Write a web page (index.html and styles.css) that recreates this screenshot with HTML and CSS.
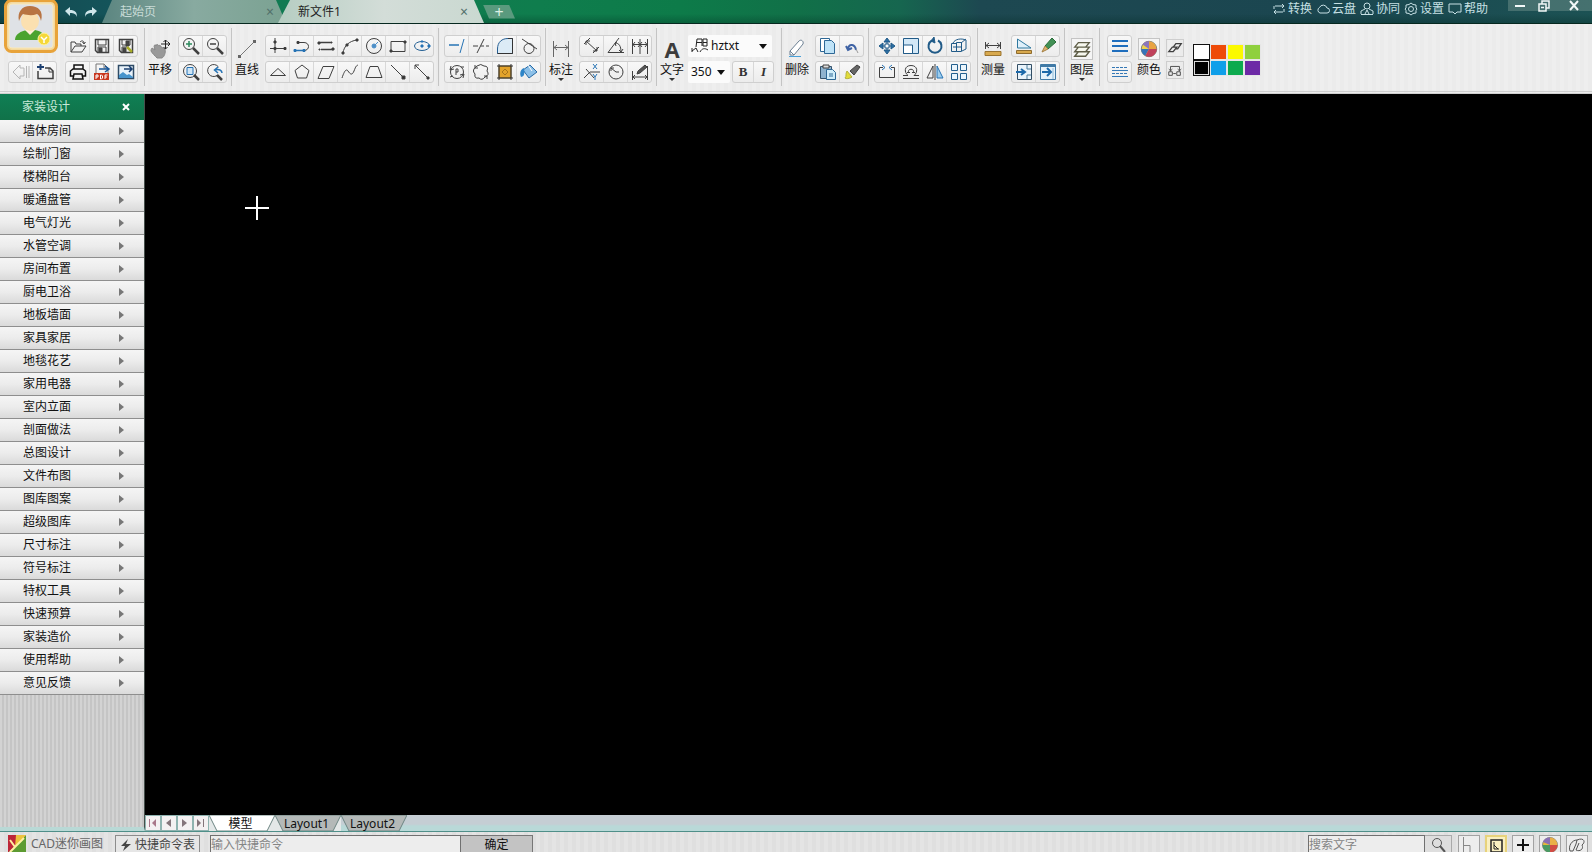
FILE: index.html
```html
<!DOCTYPE html>
<html lang="zh-CN">
<head>
<meta charset="utf-8">
<title>CAD迷你画图</title>
<link rel="stylesheet" href="styles.css">
</head>
<body>
<header class="titlebar">
  <button class="avatar" aria-label="用户">
    <svg viewBox="0 0 54 54"><rect x="1.500" y="1.500" width="51" height="51" rx="6" fill="#f3d9a0" stroke="#e8a33a" stroke-width="3"/><rect x="5" y="5" width="44" height="44" rx="3" fill="#dfe2e6" stroke="#fbe9b8"/><path d="M11 41c0-6 6-9 12-10h8c5 1 10 3 10 10z" fill="#4ba32f"/><path d="M21 31l5 5 5-5-1-4h-8z" fill="#fff0d8"/><ellipse cx="26" cy="22" rx="9" ry="10" fill="#fbe0b0"/><path d="M15 22c-2-9 3-15 11-15s14 5 11 15c-1-4-2-6-4-7-5 2-10 1-14 0-2 2-3 4-4 7z" fill="#b87442"/><circle cx="40" cy="40" r="6" fill="#f5d83a" stroke="#fff2a0"/><path d="M37 38l3 3 3-3M40 41v3" stroke="#fff" fill="none" stroke-width="1.500"/></svg>
  </button>
  <div class="history">
    <button aria-label="撤销"><svg viewBox="0 0 14 12"><path d="M1 5l5-4v3c5 0 7 2 7 7-1-3-3-4-7-4v3z" fill="#cfe6ea"/></svg></button>
    <button aria-label="重做"><svg viewBox="0 0 14 12"><path d="M13 5L8 1v3c-5 0-7 2-7 7 1-3 3-4 7-4v3z" fill="#cfe6ea"/></svg></button>
  </div>
  <nav class="doc-tabs">
    <div class="doc-tab"><button class="doc-name">起始页</button><button class="doc-close" aria-label="关闭起始页">×</button></div>
    <div class="doc-tab active"><button class="doc-name">新文件1</button><button class="doc-close" aria-label="关闭新文件1">×</button></div>
    <button class="new-tab" aria-label="新建">+</button>
  </nav>
  <nav class="menu">
    <button><svg viewBox="0 0 14 14"><path d="M3 4h9M10 2l2 2-2 2M2 7V4M11 10H2M4 8l-2 2 2 2M12 7v3"/></svg>转换</button>
    <button><svg viewBox="0 0 14 14"><path d="M4 11a3 3 0 0 1-.5-5.500A4 4 0 0 1 11 6a2.500 2.500 0 0 1 0 5z"/></svg>云盘</button>
    <button><svg viewBox="0 0 14 14"><circle cx="7" cy="4" r="3"/><path d="M1 12V9l4-2M13 12V9L9 7M1 12.500h12M5 12l2-4 2 4"/></svg>协同</button>
    <button><svg viewBox="0 0 14 14"><path d="M7 1l2 1.500 3 .5 0 3 1 1-1 1.500V11l-3 .5L7 13l-2-1.500L2 11V8.500L1 7l1-1V3l3-.5z"/><circle cx="7" cy="7" r="2.500"/></svg>设置</button>
    <button><svg viewBox="0 0 14 14"><path d="M1 2h12v8H9l-2 2-2-2H1z"/></svg>帮助</button>
  </nav>
  <div class="window-controls">
    <button aria-label="最小化"><svg viewBox="0 0 12 12"><path d="M1 6h10" stroke-width="2"/></svg></button>
    <button aria-label="还原"><svg viewBox="0 0 12 12"><path d="M4 4V1h7v7H8M1 4h7v7H1zM3 7.500h3" stroke-width="1.500"/></svg></button>
    <button class="win-close" aria-label="关闭"><svg viewBox="0 0 12 12"><path d="M2 1l8 9M10 1l-8 9" stroke-width="2"/></svg></button>
  </div>
</header>

<div class="toolbar">
  <section class="tool-section files">
    <div class="rows end">
      <div class="group">
        <button aria-label="打开"><svg viewBox="0 0 18 18"><path d="M2 15V5h4l1 2h5v2M2 15l4-6h11l-4 6zM11 5c2-2 4-1 4 1M13.500 5l1.500 2 1.500-2"/></svg></button>
        <button aria-label="保存"><svg viewBox="0 0 18 18"><path d="M2.500 2.500h13v13h-11l-2-2z" stroke-width="1.500"/><path d="M5 3v5h8V3M5 15v-5h8v5" /><path d="M6 11h3v4H6z" fill="#444"/></svg></button>
        <button aria-label="另存为"><svg viewBox="0 0 18 18"><path d="M2.500 2.500h13v13h-11l-2-2z" stroke-width="1.500"/><path d="M5 3v5h8V3M5 15v-5h5"/><path d="M6 11h3v4H6zM9 4h3v5H9z" fill="#444"/><path d="M10 10l5 5" stroke="#a9ad2a" stroke-width="2.500"/></svg></button>
      </div>
      <div class="pair">
        <div class="group">
          <button aria-label="后退"><svg viewBox="0 0 18 18"><path d="M1 9l7-7v3h4v8H8v3zM14.500 3v12M17 3v12" stroke="#b5b5b5"/></svg></button>
          <button aria-label="新建"><svg viewBox="0 0 18 18"><path d="M2 8v7.500h15V8l-3-3H9" stroke-width="1.500"/><path d="M1 4h7M4.500 1v6" stroke="#1c3f70" stroke-width="2"/><path d="M13 5v4h4"/></svg></button>
        </div>
        <div class="group">
          <button aria-label="打印"><svg viewBox="0 0 18 18"><path d="M5 6V2h9v4M5 11h8l1 5H4zM4 13H1.500V8L4 6h10l2.500 2v5H14" stroke="#111" stroke-width="1.500"/></svg></button>
          <button aria-label="输出PDF"><svg viewBox="0 0 18 18"><path d="M3 10V1h8l4 4v5M11 1v4h4" stroke="#777"/><path d="M6 6h10M12 3l4 3-4 3" stroke="#1a5798" stroke-width="1.500"/><path d="M1 10h15v7H1z" fill="#c8371f" stroke="none"/><path d="M3 16v-4h2v2H3M7.500 12v4h1l1-1v-2l-1-1zM12 16v-4h2.500M12 14h2" stroke="#fff"/></svg></button>
          <button aria-label="输出图片"><svg viewBox="0 0 18 18"><path d="M1.500 2.500h15v13h-15z" stroke="#2f4b66" fill="#e8f2fa" stroke-width="1.500"/><path d="M2 12l4-3 4 3 2-1 4 3v1H2z" fill="#4794cc" stroke="none"/><path d="M7 6h8M12 3l3 3-3 3" stroke="#1a3f70" stroke-width="1.500"/></svg></button>
        </div>
      </div>
    </div>
  </section>

  <section class="tool-section">
    <button class="big"><svg viewBox="0 0 22 22"><path d="M3 10l3 2-1-4c1-2 2-1 2 0 0-2 2-2 3 0 0-1 2-1 2 1l4 2c1 4-1 8-3 9H8c-2-2-5-5-6-7 0-2 1-3 1-3z" fill="#999" stroke="#888"/><path d="M12 6h9M16.500 2v9M14.500 4l2-2 2 2M14.500 9l2 2 2-2M19 4l2 2-2 2" stroke="#222"/></svg><span>平移</span></button>
    <div class="rows">
      <div class="group">
        <button aria-label="放大"><svg viewBox="0 0 18 18"><circle cx="7" cy="7" r="5.500"/><path d="M11 11l6 6" stroke-width="2.500"/><path d="M4 7h6M7 4v6" stroke="#2c8a5e" stroke-width="1.500"/></svg></button>
        <button aria-label="缩小"><svg viewBox="0 0 18 18"><circle cx="7" cy="7" r="5.500"/><path d="M11 11l6 6" stroke-width="2.500"/><path d="M4 7h6" stroke-width="1.500"/></svg></button>
      </div>
      <div class="group">
        <button aria-label="窗口缩放"><svg viewBox="0 0 18 18"><circle cx="8" cy="8" r="6.500"/><path d="M5 4.500h6v7H5z" stroke="#2673b4" fill="#cfe5f5"/><path d="M12 12l5 5" stroke-width="2.500"/></svg></button>
        <button aria-label="返回缩放"><svg viewBox="0 0 18 18"><path d="M11 12.500a6 6 0 1 1 1.500-8.500"/><path d="M16 10c0-3-3-4-7-3M12 4L8.500 7l3.500 3" stroke="#2673b4" stroke-width="1.500"/><path d="M11 12l5 5" stroke-width="2.500"/></svg></button>
      </div>
    </div>
  </section>

  <section class="tool-section">
    <button class="big"><svg viewBox="0 0 22 22"><path d="M4 18L18 4" stroke="#777"/><path d="M2 17h3v3H2zM17 2h3v3h-3z" fill="#666" stroke="none"/></svg><span>直线</span></button>
    <div class="rows">
      <div class="group">
        <button aria-label="构造线"><svg viewBox="0 0 18 18"><path d="M6 1v15M1 11.500h16"/><path d="M5 4h2v2H5zM5 10.500h2v2H5zM15 10.500h2v2h-2z" fill="#333"/></svg></button>
        <button aria-label="多段线"><svg viewBox="0 0 18 18"><path d="M5 5.500h6c6 0 6 8 0 8"/><path d="M1 13.500h10" stroke="#2673b4" stroke-width="1.500"/><path d="M4 4.500h2v2H4z" fill="#333"/><path d="M1 12.500h2v2H1zM10 12.500h2v2h-2z" fill="#2673b4" stroke="#2673b4"/></svg></button>
        <button aria-label="双线"><svg viewBox="0 0 18 18"><path d="M3 5.500h11M4 12.500h12" stroke-width="1.500"/><path d="M1 5h2v2H1zM15 11h2v2h-2zM14 5h1v1h-1zM2 12h1v1H2z" fill="#333"/></svg></button>
        <button aria-label="圆弧"><svg viewBox="0 0 18 18"><path d="M2 16C3 9 8 4 16 3"/><path d="M1 15h2v2H1zM5 7h2v2H5zM15 2h2v2h-2z" fill="#333"/></svg></button>
        <button aria-label="圆"><svg viewBox="0 0 18 18"><circle cx="9" cy="9" r="7.500"/><circle cx="9" cy="9" r="2" fill="#4c8fc8" stroke="#4c8fc8"/><path d="M9 9l4-4" stroke="#4c8fc8"/></svg></button>
        <button aria-label="矩形"><svg viewBox="0 0 18 18"><path d="M2 4.500h14v10H2z"/><path d="M1 13h2v2H1zM15 4h2v2h-2z" fill="#333"/></svg></button>
        <button aria-label="椭圆"><svg viewBox="0 0 18 18"><ellipse cx="9" cy="9" rx="7.500" ry="4.500" stroke="#235f93"/><path d="M8 8h2v2H8zM8 4h2v1H8zM15 8h2v2h-2z" fill="#2673b4" stroke="#2673b4"/></svg></button>
      </div>
      <div class="group">
        <button aria-label="三角形"><svg viewBox="0 0 18 18"><path d="M1.500 12.500L9 5.500l7.500 7z"/></svg></button>
        <button aria-label="多边形"><svg viewBox="0 0 18 18"><path d="M9 2l7 5.500L13.500 15h-9L2 7.500z"/></svg></button>
        <button aria-label="平行四边形"><svg viewBox="0 0 18 18"><path d="M6 3.500h11l-5 12H1z"/></svg></button>
        <button aria-label="样条曲线"><svg viewBox="0 0 18 18"><path d="M1 15c2-6 4-10 6-7s4 5 6 0 2-5 4-6"/></svg></button>
        <button aria-label="梯形"><svg viewBox="0 0 18 18"><path d="M5 3.500h8l4 11H1z"/></svg></button>
        <button aria-label="射线"><svg viewBox="0 0 18 18"><path d="M2 2l13 13"/><path d="M13 13h3v3h-3z" fill="#333"/></svg></button>
        <button aria-label="双向线"><svg viewBox="0 0 18 18"><path d="M2 2l14 14M2 6V2h4"/><path d="M14 14h2v2h-2z" fill="#333"/></svg></button>
      </div>
    </div>
  </section>

  <section class="tool-section plain">
    <div class="rows">
      <div class="group">
        <button aria-label="延伸"><svg viewBox="0 0 18 18"><path d="M1 8h10" stroke="#2673b4" stroke-width="1.500"/><path d="M16 2l-4 14" stroke="#2673b4"/></svg></button>
        <button aria-label="修剪"><svg viewBox="0 0 18 18"><path d="M1 9h5M9 9h3M14 9h3M12 2L5 16"/></svg></button>
        <button aria-label="圆角"><svg viewBox="0 0 18 18"><path d="M1.500 16.500V12C1.500 5 6 1.500 12 1.500h4.500v15z" fill="#dcebf6" stroke="#275f93"/><path d="M12 1.500h4.500v15h-15" stroke="#333"/></svg></button>
        <button aria-label="相切"><svg viewBox="0 0 18 18"><circle cx="9" cy="11.500" r="5"/><path d="M2 2l15 10"/></svg></button>
      </div>
      <div class="group">
        <button aria-label="圆形阵列"><svg viewBox="0 0 18 18"><circle cx="9" cy="9" r="6.500"/><path d="M3 3l-1 4 4-1M15 15l1-4-4 1M8 12V6h2v3H8M2 14l3-1M13 4l3 0"/></svg></button>
        <button aria-label="修订云线"><svg viewBox="0 0 18 18"><path d="M5 3q4-3 7 0 5 0 3 5 3 4-2 6-3 4-6 1-5 1-4-4-4-4 2-8zM3 2v3h3M15 16v-3h-3"/></svg></button>
        <button aria-label="图案填充"><svg viewBox="0 0 18 18"><path d="M3 3h12v12H3z" fill="#e3a32b" stroke="#82601c"/><path d="M1 3h16M1 15h16M3 1v16M15 1v16" stroke="#333"/><path d="M6 9l3-3 3 3-3 3z" stroke="#a8741a"/></svg></button>
        <button aria-label="填充颜色"><svg viewBox="0 0 18 18"><path d="M3 7l7-5 7 7-8 6z" fill="#8cc0e8" stroke="#286ba6"/><path d="M8 2l4 6" stroke="#fff"/><path d="M4 5c-3 1-5 5-3 9 3 0 4-3 3-8z" fill="#2e85c8" stroke="none"/></svg></button>
      </div>
    </div>
  </section>

  <section class="tool-section">
    <button class="big arrow"><svg viewBox="0 0 22 22"><path d="M3.500 3v16M18.500 3v16M4 9.500h14M7 7L4 9.500 7 12M15 7l3 2.500-3 2.500" stroke="#666"/></svg><span>标注</span></button>
    <div class="rows">
      <div class="group">
        <button aria-label="对齐标注"><svg viewBox="0 0 18 18"><path d="M1 7l6-6M10 16l6-6M3 4l11 10M3 8V4h4M10 14h4v-4"/></svg></button>
        <button aria-label="角度标注"><svg viewBox="0 0 18 18"><path d="M12 1L1 15.500h16M8 6c4 0 6 3 6 9M10 5L8 6l1 3M12 13l2 2 2-3"/></svg></button>
        <button aria-label="连续标注"><svg viewBox="0 0 18 18"><path d="M1.500 2v15M9 2v15M16.500 2v15M2 7.500h14M4 5L2 7.500 4 10M7 5l2 2.500L7 10M11 5L9 7.500 11 10M14 5l2 2.500L14 10" /></svg></button>
      </div>
      <div class="group">
        <button aria-label="坐标标注"><svg viewBox="0 0 18 18"><path d="M1 15l6-6h10M3 6l8 9"/><path d="M10 1l4 5M14 1l-4 5M10 11l2 3 2-3M12 14v3" stroke="#2673b4"/></svg></button>
        <button aria-label="半径标注"><svg viewBox="0 0 18 18"><circle cx="9" cy="9" r="7"/><path d="M9 9L4 5M4 8V5h3M9 9h3"/></svg></button>
        <button aria-label="编辑标注"><svg viewBox="0 0 18 18"><path d="M1.500 8v9M16.500 3v14M2 14h14M4 12l-2 2 2 2M14 12l2 2-2 2"/><path d="M6 11l1-3 7-6 2 2-7 6z" fill="#555"/></svg></button>
      </div>
    </div>
  </section>

  <section class="tool-section text-tools">
    <button class="big arrow"><span class="letter">A</span><span>文字</span></button>
    <div class="rows">
      <label class="field font-field"><svg viewBox="0 0 18 18"><path d="M1 14l4-3M5 11l2 4M1 11v4M5 10l1-8h5v7M6 5.500h5M12 2h4v7h-4zM12 5.500h4M9 15c2-4 5-4 8-2" stroke="#222"/></svg><select aria-label="字体"><option>hztxt</option></select><i></i></label>
      <div class="pair">
        <label class="field size-field"><select aria-label="字高"><option>350</option></select><i></i></label>
        <div class="group style-group"><button class="bold">B</button><button class="italic">I</button></div>
      </div>
    </div>
  </section>

  <section class="tool-section">
    <button class="big"><svg viewBox="0 0 22 22"><path d="M4 13L13 3c2-2 5 0 4 3L8 17H4z" fill="#fff" stroke="#6b7f92"/><path d="M4 13l4 4" stroke="#6b7f92"/><path d="M3 18.500h12" stroke="#49a0d8"/></svg><span>删除</span></button>
    <div class="rows">
      <div class="group">
        <button aria-label="复制"><svg viewBox="0 0 18 18"><path d="M1.500 1.500h9v13h-9z" fill="#fff" stroke="#2e6896"/><path d="M5.500 3.500h7l3 3v10h-10z" fill="#bfe3f7" stroke="#2e6896"/></svg></button>
        <button aria-label="带基点复制"><svg viewBox="0 0 18 18"><path d="M5 12c1-6 7-5 8 1M3 9l2 4 4-2" stroke="#3e62a4" stroke-width="2"/><path d="M13 12l2 4" stroke="#999"/></svg></button>
      </div>
      <div class="group">
        <button aria-label="粘贴"><svg viewBox="0 0 18 18"><path d="M1.500 3.500h11v12h-11z" fill="#8fb3ce" stroke="#34536c"/><path d="M4 2h6v3H4z" fill="#ddd"/><path d="M7.500 6.500h6l3 3v7h-9z" fill="#d0edfa" stroke="#2e6896"/><path d="M10 11h4M10 13h4" stroke="#2e6896"/></svg></button>
        <button aria-label="格式刷"><svg viewBox="0 0 18 18"><path d="M4 8l5 6c-3 2-6 2-7 1 2-2 0-4 2-7z" fill="#e2dc3a" stroke="#b5b23c"/><path d="M7 8l7-6 3 2-6 8z" fill="#666"/></svg></button>
      </div>
    </div>
  </section>

  <section class="tool-section plain modify">
    <div class="rows">
      <div class="group blue">
        <button aria-label="移动"><svg viewBox="0 0 18 18"><path d="M9 3v12M3 9h12"/><path d="M9 1l3 4H6zM9 17l3-4H6zM1 9l4-3v6zM17 9l-4-3v6z" fill="#2b6da3"/><path d="M7 7h4v4H7z" fill="#fff"/></svg></button>
        <button aria-label="缩放"><svg viewBox="0 0 18 18"><path d="M1.500 1.500h15v15h-15z" fill="#d3e8f7"/><path d="M1.500 8h9v8.500h-9z" fill="#fff"/></svg></button>
        <button aria-label="旋转"><svg viewBox="0 0 18 18"><path d="M6 3.500a6.500 6.500 0 1 0 6 0" stroke-width="2"/><path d="M8 0l-3 4 4 2z" fill="#215b88"/></svg></button>
        <button aria-label="三维旋转"><svg viewBox="0 0 18 18"><path d="M1.500 6.500h5v8h-5zM6.500 5.500h5v9h-5zM3 6c2-4 8-5 13-3v9l-4 2M11 6l5-4M3 10h9"/></svg></button>
      </div>
      <div class="group">
        <button aria-label="打断"><svg viewBox="0 0 18 18"><path d="M5 4.500H1.500v10h15v-10H13"/><path d="M4 2l3 2.500L4 7M14 2l-3 2.500L14 7" stroke="#2673b4"/></svg></button>
        <button aria-label="偏移"><svg viewBox="0 0 18 18"><path d="M1 15.500h16M1 12.500h5c-4-3-4-10 3-10s7 7 3 10h5M7 10c-3-5 7-5 4 0M5 9.500h3M10 9.500h3"/></svg></button>
        <button aria-label="镜像"><svg viewBox="0 0 18 18"><path d="M7 3v12H1z"/><path d="M11 3v12h6z" fill="#9dcdec" stroke="#2673b4"/><path d="M9 1v16"/></svg></button>
        <button aria-label="阵列"><svg viewBox="0 0 18 18"><path d="M1.500 1.500h6v6h-6zM10.500 1.500h6v6h-6zM1.500 10.500h6v6h-6zM10.500 10.500h6v6h-6z" stroke="#245f8d" fill="#eaf5fc"/></svg></button>
      </div>
    </div>
  </section>

  <section class="tool-section">
    <button class="big"><svg viewBox="0 0 22 22"><path d="M3.500 4v7M18.500 4v7M4 7.500h14M7 5L4 7.500 7 10M15 5l3 2.500-3 2.500"/><path d="M3 13.500h16v4H3z" fill="#d8a94e" stroke="#9b7430"/></svg><span>测量</span></button>
    <div class="rows">
      <div class="group">
        <button aria-label="面积"><svg viewBox="0 0 18 18"><path d="M2.500 2v9H16z" fill="#dff0fa" stroke="#2e789f"/><path d="M1.500 13.500h15v3h-15z" fill="#d8a94e" stroke="#8f6c2e"/></svg></button>
        <button aria-label="测量笔"><svg viewBox="0 0 18 18"><path d="M6 9l7-8 4 4-8 7z" fill="#429155" stroke="#286b38"/><path d="M6 9l3 3-6 3z" fill="#dcb46f" stroke="#a58044"/></svg></button>
      </div>
      <div class="group">
        <button aria-label="插入"><svg viewBox="0 0 18 18"><path d="M2.500 1.500h14v15h-14z" fill="#e9f3fa" stroke="#334e65"/><path d="M1 9h8M6 6l4 3-4 3" stroke="#1c69aa" stroke-width="2"/><path d="M12 2v4h4M12 16v-4h4" stroke="#4d7e9e"/></svg></button>
        <button aria-label="导入"><svg viewBox="0 0 18 18"><path d="M1.500 1.500h15v15h-15z" fill="#e5f2fb" stroke="#407aa6"/><path d="M2 3h14" stroke="#407aa6" stroke-width="2"/><path d="M3 9h8M8 5l4 4-4 4" stroke="#1c69aa" stroke-width="2"/><path d="M14 5v11" stroke="#8dbbd9"/></svg></button>
      </div>
    </div>
  </section>

  <section class="tool-section layers">
    <button class="big arrow framed"><svg viewBox="0 0 22 22"><path d="M3 19l4-5h12l-4 5zM3 14l4-5h12l-4 5zM3 9l4-5h12l-4 5z" fill="#f7f8ee" stroke="#5f5e48" stroke-width="1.500"/></svg><span>图层</span></button>
  </section>

  <section class="tool-section last">
    <div class="rows">
      <div class="group"><button aria-label="线宽"><svg viewBox="0 0 18 18"><path d="M1 4h16M1 9h16M1 14h16" stroke="#1f6ebd" stroke-width="2"/></svg></button></div>
      <div class="group"><button aria-label="线型"><svg viewBox="0 0 18 18"><path d="M1 4.500h16M1 10.500h16" stroke="#3578b6" stroke-dasharray="3 1"/><path d="M1 7.500h16M1 13.500h16" stroke="#3578b6"/></svg></button></div>
    </div>
    <button class="big framed"><svg viewBox="0 0 22 22"><circle cx="11" cy="11" r="8.500" fill="#efd34b" stroke="#777"/><path d="M11 11L4 6a8.500 8.500 0 0 1 7-3.500z" fill="#8b76bd" stroke="none"/><path d="M11 11V2.500a8.500 8.500 0 0 1 8 8.500z" fill="#e9a343" stroke="none"/><path d="M2.500 11H11l-4 7.500a8.500 8.500 0 0 1-4.500-7.500z" fill="#3673b8" stroke="none"/><path d="M11 11h8.500A8.500 8.500 0 0 1 7 18.500z" fill="#c0425c" stroke="none"/></svg><span>颜色</span></button>
    <div class="small-buttons">
      <button aria-label="图层工具"><svg viewBox="0 0 18 18"><path d="M2 13l4-5h5l-4 5zM7 8l3-4h6l-4 6h-3" stroke-width="1.500"/></svg></button>
      <button aria-label="线路"><svg viewBox="0 0 18 18"><path d="M4 10V5h10v5M7 13h3M2 11h4v4H2zM11 11h4v4h-4zM2 8l2 2 2-2M12 8l2 2 2-2"/></svg></button>
    </div>
    <div class="palette">
      <button class="c-white" aria-label="白"></button><button class="c-orange" aria-label="橙"></button><button class="c-yellow" aria-label="黄"></button><button class="c-lime" aria-label="浅绿"></button>
      <button class="c-black" aria-label="黑"></button><button class="c-blue" aria-label="蓝"></button><button class="c-green" aria-label="绿"></button><button class="c-purple" aria-label="紫"></button>
    </div>
  </section>
</div>

<main class="workspace">
  <aside class="sidebar">
    <div class="side-head"><h2>家装设计</h2><button aria-label="关闭面板"><svg viewBox="0 0 8 8"><path d="M1 1l6 6M7 1L1 7"/></svg></button></div>
    <nav class="side-list">
      <button>墙体房间</button><button>绘制门窗</button><button>楼梯阳台</button><button>暖通盘管</button><button>电气灯光</button>
      <button>水管空调</button><button>房间布置</button><button>厨电卫浴</button><button>地板墙面</button><button>家具家居</button>
      <button>地毯花艺</button><button>家用电器</button><button>室内立面</button><button>剖面做法</button><button>总图设计</button>
      <button>文件布图</button><button>图库图案</button><button>超级图库</button><button>尺寸标注</button><button>符号标注</button>
      <button>特权工具</button><button>快速预算</button><button>家装造价</button><button>使用帮助</button><button>意见反馈</button>
    </nav>
  </aside>
  <div class="drawing">
    <div class="canvas">
      <svg class="crosshair" viewBox="0 0 24 24"><path d="M0 12h24M12 0v24"/></svg>
    </div>
    <div class="sheet-bar">
      <div class="sheet-nav">
        <button aria-label="首页"><svg viewBox="0 0 12 12"><path d="M9 2v8L5 6zM2 2h1v8H2z" fill="#a9788a"/></svg></button>
        <button aria-label="上一页"><svg viewBox="0 0 12 12"><path d="M8 2v8L3 6z" fill="#84757b"/></svg></button>
        <button aria-label="下一页"><svg viewBox="0 0 12 12"><path d="M3 2v8l5-4z" fill="#84757b"/></svg></button>
        <button aria-label="末页"><svg viewBox="0 0 12 12"><path d="M2 2v8l4-4zM8 2h1v8H8z" fill="#84757b"/></svg></button>
      </div>
      <button class="sheet active"><svg viewBox="0 0 66 16" preserveAspectRatio="none"><path d="M0 0l8 16h50l8-16z"/></svg><span>模型</span></button>
      <button class="sheet"><svg viewBox="0 0 66 16" preserveAspectRatio="none"><path d="M0 0l8 16h50l8-16z"/></svg><span>Layout1</span></button>
      <button class="sheet"><svg viewBox="0 0 66 16" preserveAspectRatio="none"><path d="M0 0l8 16h50l8-16z"/></svg><span>Layout2</span></button>
    </div>
  </div>
</main>

<footer class="status">
  <div class="brand"><svg viewBox="0 0 18 18"><path d="M0 0h18L0 18z" fill="#bd2638"/><path d="M18 0v18H0z" fill="#5d9b32"/><path d="M8 0h10L7 12z" fill="#edc33d"/><path d="M2 5l5 7 9-9M7 12l-5 5" stroke="#fff0a0" stroke-width="2" fill="none"/></svg><span>CAD迷你画图</span></div>
  <button class="shortcut"><svg viewBox="0 0 12 14"><path d="M8 1L1 8h4l-2 5 8-7H6z" fill="#444"/></svg>快捷命令表</button>
  <form class="command"><input type="text" placeholder="输入快捷命令" aria-label="输入快捷命令"><button type="button">确定</button></form>
  <form class="search"><input type="text" placeholder="搜索文字" aria-label="搜索文字"><button type="button" aria-label="搜索"><svg viewBox="0 0 18 18"><circle cx="8" cy="7" r="4.500"/><path d="M11 10l5 6" stroke-width="2"/></svg></button></form>
  <div class="modes">
    <button aria-label="正交"><svg viewBox="0 0 18 18"><path d="M3.500 1v17M4 9.500h6V18" stroke="#888"/></svg></button>
    <button class="on" aria-label="捕捉"><svg viewBox="0 0 18 18"><path d="M4 3h11v12H4z" stroke="#222" stroke-width="1.500"/><path d="M7 5v7h5M7 8l4 4" stroke="#222"/></svg></button>
    <button aria-label="十字光标"><svg viewBox="0 0 18 18"><path d="M3 9h12M9 3v12" stroke="#111" stroke-width="2"/></svg></button>
    <button aria-label="背景颜色"><svg viewBox="0 0 18 18"><circle cx="9" cy="9" r="7.500" fill="#e6b838" stroke="#888"/><path d="M9 9L2 6a7 7 0 0 1 7-4.500z" fill="#8a70b4" stroke="none"/><path d="M9 1.500A7.500 7.500 0 0 1 16.500 9H9z" fill="#e9b048" stroke="none"/><path d="M1.500 9H9v7.500A7.500 7.500 0 0 1 1.500 9z" fill="#4a9a62" stroke="none"/><path d="M9 9h7.500A7.500 7.500 0 0 1 9 16.500z" fill="#d14c45" stroke="none"/></svg></button>
    <button aria-label="橡皮"><svg viewBox="0 0 18 18"><path d="M2 15c-2-5 2-11 7-11l-1 4-3 7zM9 4c7-3 9 2 5 5 2 4-2 7-6 5l3-7" stroke="#555"/></svg></button>
  </div>
</footer>
</body>
</html>
```

FILE: styles.css
```css
* { box-sizing: border-box; }

body {
  margin: 0;
  height: 100vh;
  display: flex;
  flex-direction: column;
  overflow: hidden;
  background: #ececec;
  color: #111;
  font: 12px/16px "Noto Sans", "Noto Sans CJK SC", sans-serif;
}

button, input, select { font: inherit; color: inherit; margin: 0; }
button { padding: 0; border: 0; background: none; white-space: nowrap; }
svg { display: block; flex: none; fill: none; }

/* Title bar */
.titlebar {
  position: relative;
  display: flex;
  flex: none;
  height: 24px;
  padding-left: 64px;
  border-bottom: 1px solid #06281f;
  background:
    linear-gradient(180deg, transparent 60%, rgba(0, 40, 30, .3)),
    linear-gradient(90deg, #14484f 0, #14545a 110px, #107a52 280px, #0f7d4d 540px, #0d7b49 680px, #117048 800px, #16664f 900px, #1d4851 980px, #1b4650 1300px, #1c5254 100%);
}

.avatar {
  position: absolute;
  z-index: 2;
  left: 4px;
  top: -1px;
}
.avatar svg { width: 54px; height: 54px; }

.history { display: flex; align-items: center; gap: 6px; }
.history svg { width: 14px; height: 12px; }

.doc-tabs { display: flex; padding-left: 4px; }
.doc-tab {
  display: flex;
  align-items: center;
  justify-content: space-between;
  width: 184px;
  height: 23px;
  padding: 0 12px 0 18px;
  color: #c8dbd6;
  background: linear-gradient(90deg, #5b8580, #88aaa0 50%, #7ba292);
  clip-path: polygon(10px 0, 174px 0, 184px 100%, 0 100%);
}
.doc-tab.active {
  width: 212px;
  margin-left: -8px;
  padding: 0 22px 0 20px;
  color: #222;
  background: linear-gradient(90deg, #b6cdc2, #d3ddd8 50%, #c9d8d0);
  clip-path: polygon(12px 0, 196px 0, 206px 100%, 0 100%);
}
.doc-close { color: #52706a; font-size: 14px; }
.new-tab {
  align-self: center;
  width: 32px;
  height: 14px;
  margin-left: -7px;
  color: #dcefe4;
  font-size: 16px;
  line-height: 14px;
  background: #5a9a7e;
  clip-path: polygon(0 0, 26px 0, 32px 100%, 6px 100%);
}

.menu { display: flex; gap: 4px; margin-left: auto; height: 17px; color: #c7e0e4; }
.menu button { display: flex; align-items: center; gap: 2px; }
.menu svg { width: 14px; height: 14px; stroke: #c7e0e4; }

.window-controls {
  display: flex;
  height: 11px;
  margin-left: 20px;
  background: rgba(120, 150, 145, .45);
}
.window-controls button { display: grid; place-items: center; width: 24px; height: 10px; }
.window-controls .win-close { width: 36px; }
.window-controls svg { width: 12px; height: 12px; stroke: #f2f8f8; }

/* Toolbar */
.toolbar {
  display: flex;
  flex: none;
  height: 70px;
  padding: 4px 0 5px;
  border-bottom: 3px double #cfcfcf;
  background: repeating-linear-gradient(90deg, #eeeeee 0 4px, #ebebeb 4px 8px);
}
.toolbar svg { width: 18px; height: 18px; stroke: #404040; }
.tool-section {
  display: flex;
  align-items: flex-start;
  gap: 3px;
  padding: 0 4px 0 0;
  border-right: 1px solid #c4c4c4;
}
.tool-section.plain { padding-left: 5px; }
.tool-section.files { width: 145px; justify-content: flex-end; padding-right: 6px; }
.tool-section.modify { padding-right: 6px; }
.tool-section.layers { padding: 0 2px; }
.tool-section.last { gap: 2px; padding-left: 7px; border-right: 0; }
.rows { display: flex; flex-direction: column; gap: 4px; padding-top: 7px; }
.rows.end { align-items: flex-end; }
.pair { display: flex; gap: 8px; }
.group {
  display: flex;
  height: 22px;
  border: 1px solid #cfcfcf;
  border-radius: 3px;
  background: linear-gradient(#f8f8f8, #ececec);
}
.group button {
  display: grid;
  place-items: center;
  width: 24px;
  border-left: 1px solid #d8d8d8;
}
.group button:first-child { border-left: 0; width: 23px; }
.blue svg { stroke: #215b88; }

.big {
  display: flex;
  flex-direction: column;
  align-items: center;
  gap: 2px;
  width: 30px;
  padding-top: 10px;
}
.big svg { width: 22px; height: 22px; }
.big.arrow::after {
  content: "";
  width: 0;
  margin-top: -2px;
  border: 3px solid transparent;
  border-top-color: #333;
  border-bottom: 0;
}
.big.framed svg { border: 1px solid #c4c4c4; background: #f5f5f5; }
.letter { font: bold 22px/22px "Open Sans", sans-serif; color: #3c3c3c; }

.field {
  display: flex;
  align-items: center;
  height: 22px;
  gap: 2px;
  padding: 0 5px 0 3px;
  background: #fbfbfb;
  border-radius: 2px;
}
.field select {
  flex: 1;
  min-width: 0;
  padding: 0;
  border: 0;
  background: none;
  appearance: none;
}
.field i { border: 4px solid transparent; border-top: 5px solid #111; border-bottom: 0; }
.font-field { width: 84px; }
.size-field { width: 42px; }
.text-tools { gap: 1px; }
.text-tools .rows { width: 89px; }
.text-tools .pair { gap: 2px; }
.style-group button, .style-group button:first-child { width: 20px; font: bold 13px/18px "Liberation Serif", serif; color: #333; }
.style-group .italic { font-style: italic; }

.small-buttons { display: grid; gap: 4px; padding-top: 11px; }
.small-buttons button { width: 18px; height: 18px; border: 1px solid #cecece; }
.small-buttons svg { width: 16px; height: 16px; }
.palette {
  display: grid;
  grid-template-columns: repeat(4, 17px);
  grid-auto-rows: 16px;
  margin: 16px 0 0 7px;
}
.palette button { border: 1px solid #e6e6e6; }
.palette .c-white { background: #fff; border-color: #111; }
.palette .c-black { background: #000; border-color: #111; box-shadow: inset 0 0 0 1px #ddd; }
.c-orange { background: #ee4b09; }
.c-yellow { background: #fbf900; }
.c-lime { background: #8fd03e; }
.c-blue { background: #109fe9; }
.c-green { background: #0daa4e; }
.c-purple { background: #6d2aa6; }

/* Workspace */
.workspace { display: flex; flex: 1; min-height: 0; }
.sidebar {
  display: flex;
  flex-direction: column;
  flex: none;
  width: 145px;
  border-right: 1px solid #46504c;
  border-bottom: 4px solid #b9d9d6;
  background: repeating-linear-gradient(90deg, #d3d3d3 0 2px, #c5c5c5 2px 4px);
}
.side-head {
  display: flex;
  align-items: center;
  justify-content: space-between;
  height: 26px;
  padding: 0 14px 0 22px;
  color: #c9e9d9;
  background: linear-gradient(#0f7f54, #107249);
}
.side-head h2 { margin: 0; font: inherit; }
.side-head svg { width: 8px; height: 8px; stroke: #fff; stroke-width: 2; }
.side-list { display: flex; flex-direction: column; }
.side-list button {
  display: flex;
  align-items: center;
  justify-content: space-between;
  height: 23px;
  padding: 0 20px 0 23px;
  border-bottom: 1px solid #8e8e8e;
  background: linear-gradient(#f5f5f5, #ececec 50%, #dadada);
}
.side-list button::after {
  content: "";
  border: 4px solid transparent;
  border-left: 5px solid #777;
  border-right: 0;
}

.drawing { display: flex; flex-direction: column; flex: 1; min-width: 0; }
.canvas { position: relative; flex: 1; background: #000; }
.crosshair {
  position: absolute;
  left: 100px;
  top: 102px;
  width: 24px;
  height: 24px;
  stroke: #fff;
  stroke-width: 2;
}

.sheet-bar {
  display: flex;
  flex: none;
  height: 16px;
  background: linear-gradient(#c5ced4 0 9px, #b9d9d8 11px);
}
.sheet-nav { display: flex; width: 64px; }
.sheet-nav button {
  display: grid;
  place-items: center;
  flex: 1;
  border: 1px solid #8fb3b0;
  background: #f4f1f2;
}
.sheet-nav svg { width: 12px; height: 12px; }
.sheet { display: grid; width: 66px; place-items: center; background: #e4e8e8; }
.sheet svg, .sheet span { grid-area: 1 / 1; }
.sheet svg { width: 66px; height: 16px; fill: #b4b9b8; stroke: #6c8582; }
.sheet span { z-index: 1; padding: 1px 3px 0 0; line-height: 15px; }
.sheet.active svg { fill: #fff; }
.sheet:last-child { background: none; }

/* Status bar */
.status {
  display: flex;
  flex: none;
  height: 21px;
  padding: 3px 4px 0 8px;
  overflow: hidden;
  border-top: 1px solid #4f8f89;
  background: repeating-linear-gradient(90deg, #e4e4e4 0 4px, #dfdfdf 4px 8px);
}
.status svg { width: 18px; height: 18px; stroke: #555; }
.brand { display: flex; gap: 5px; width: 107px; color: #666; line-height: 18px; }
.brand svg { stroke: none; }
.shortcut {
  display: flex;
  align-items: center;
  justify-content: center;
  gap: 3px;
  width: 85px;
  height: 20px;
  border: 1px solid #8c8c8c;
  background: #e6e6e6;
  color: #444;
}
.shortcut svg { width: 12px; height: 14px; stroke: none; }
.command, .search { display: flex; height: 20px; }
.command { margin-left: 10px; }
.command input, .search input {
  padding: 0;
  border: 1px solid #707070;
  border-radius: 0;
  background: #ededed;
}
.command input { width: 251px; }
.search input { width: 117px; }
.command input::placeholder, .search input::placeholder { color: #858585; opacity: 1; }
.command button { width: 72px; border: 1px solid #777; border-left: 0; background: #c3c3c3; }
.search { margin-left: auto; }
.search button { display: grid; place-items: center; width: 27px; border: 1px solid #aaa; border-left: 0; background: #dedede; }
.modes { display: flex; gap: 5px; margin-left: 6px; }
.modes button { display: grid; place-items: center; width: 22px; height: 20px; border: 1px solid #a2a2a2; background: #ededed; }
.modes .on { border: 2px solid #e7d27b; background: #f9efc0; }
```
